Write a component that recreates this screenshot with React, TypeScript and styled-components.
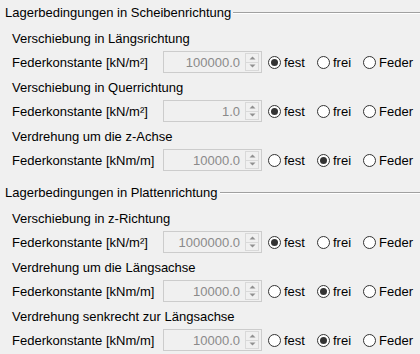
import React from "react";
import styled, { createGlobalStyle } from "styled-components";

const Global = createGlobalStyle`
  html, body { margin: 0; padding: 0; background: #f0f0f0; }
  body {
    font-family: "Liberation Sans", Arial, sans-serif;
    font-size: 13px;
    color: #000;
    width: 420px;
    height: 354px;
    overflow: hidden;
  }
`;

const Page = styled.div`
  display: flex;
  flex-direction: column;
  padding-top: 5px;
`;

const Group = styled.section<{ $gapTop: number }>`
  display: flex;
  flex-direction: column;
  margin-top: ${(p) => p.$gapTop}px;
`;

const GroupHeader = styled.div`
  display: flex;
  align-items: center;
  height: 16px;
  padding-left: 5px;
`;

const GroupTitle = styled.span`
  white-space: nowrap;
  line-height: 16px;
`;

const GroupLine = styled.div`
  flex: 1;
  height: 0;
  margin-left: 2px;
  border-top: 1px solid #a0a0a0;
  border-bottom: 1px solid #ffffff;
`;

const Item = styled.div<{ $first: boolean }>`
  display: flex;
  flex-direction: column;
  margin-top: ${(p) => (p.$first ? 9 : 6)}px;
`;

const SubHeading = styled.div`
  height: 18px;
  line-height: 18px;
  padding-left: 12px;
  white-space: nowrap;
`;

const Row = styled.div`
  display: flex;
  align-items: center;
  height: 22px;
  margin-top: 3px;
  padding-left: 12px;
`;

const FieldLabel = styled.span`
  flex: 0 0 151px;
  white-space: nowrap;
`;

const Spin = styled.div`
  flex: 0 0 99px;
  display: flex;
  align-items: center;
  box-sizing: border-box;
  height: 22px;
  border: 1px solid #cccccc;
  background: #f0f0f0;
`;

const SpinValue = styled.span`
  flex: 1;
  text-align: right;
  color: #8a8a8a;
  padding-right: 5px;
`;

const SpinButtons = styled.div`
  display: flex;
  flex-direction: column;
  width: 14px;
  height: 18px;
  margin-right: 2px;
  border: 1px solid #d9d9d9;
  box-sizing: border-box;
`;

const SpinBtn = styled.div<{ $down?: boolean }>`
  flex: 1;
  display: flex;
  align-items: center;
  justify-content: center;
  ${(p) => (p.$down ? "border-top: 1px solid #d9d9d9;" : "")}
`;

const Radios = styled.div`
  display: flex;
  align-items: center;
  flex-shrink: 0;
  margin-left: 6px;
  gap: 12px;
`;

const RadioOpt = styled.label`
  display: flex;
  align-items: center;
  white-space: nowrap;
`;

const RadioCircle = styled.span<{ $on: boolean }>`
  position: relative;
  box-sizing: border-box;
  width: 13px;
  height: 13px;
  border-radius: 50%;
  border: 1px solid #333333;
  background: #ffffff;
  margin-right: 3px;
  &::after {
    content: "";
    display: ${(p) => (p.$on ? "block" : "none")};
    position: absolute;
    left: 2px;
    top: 2px;
    width: 7px;
    height: 7px;
    border-radius: 50%;
    background: #333333;
  }
`;

const Arrow = ({ down }: { down?: boolean }) => (
  <svg width="7" height="4" viewBox="0 0 7 4">
    {down ? (
      <polygon points="0.5,0.5 6.5,0.5 3.5,3.5" fill="#909090" />
    ) : (
      <polygon points="0.5,3.5 6.5,3.5 3.5,0.5" fill="#909090" />
    )}
  </svg>
);

type Choice = "fest" | "frei" | "Feder";

interface Entry {
  title: string;
  unit: string;
  value: string;
  choice: Choice;
}

const groups: { title: string; gap: number; items: Entry[] }[] = [
  {
    title: "Lagerbedingungen in Scheibenrichtung",
    gap: 0,
    items: [
      { title: "Verschiebung in Längsrichtung", unit: "Federkonstante [kN/m²]", value: "100000.0", choice: "fest" },
      { title: "Verschiebung in Querrichtung", unit: "Federkonstante [kN/m²]", value: "1.0", choice: "fest" },
      { title: "Verdrehung um die z-Achse", unit: "Federkonstante [kNm/m]", value: "10000.0", choice: "frei" },
    ],
  },
  {
    title: "Lagerbedingungen in Plattenrichtung",
    gap: 14,
    items: [
      { title: "Verschiebung in z-Richtung", unit: "Federkonstante [kN/m²]", value: "1000000.0", choice: "fest" },
      { title: "Verdrehung um die Längsachse", unit: "Federkonstante [kNm/m]", value: "10000.0", choice: "frei" },
      { title: "Verdrehung senkrecht zur Längsachse", unit: "Federkonstante [kNm/m]", value: "10000.0", choice: "frei" },
    ],
  },
];

const options: Choice[] = ["fest", "frei", "Feder"];

export default function App() {
  return (
    <>
      <Global />
      <Page>
        {groups.map((g) => (
          <Group key={g.title} $gapTop={g.gap}>
            <GroupHeader>
              <GroupTitle>{g.title}</GroupTitle>
              <GroupLine />
            </GroupHeader>
            {g.items.map((it, i) => (
              <Item key={it.title} $first={i === 0}>
                <SubHeading>{it.title}</SubHeading>
                <Row>
                  <FieldLabel>{it.unit}</FieldLabel>
                  <Spin>
                    <SpinValue>{it.value}</SpinValue>
                    <SpinButtons>
                      <SpinBtn>
                        <Arrow />
                      </SpinBtn>
                      <SpinBtn $down>
                        <Arrow down />
                      </SpinBtn>
                    </SpinButtons>
                  </Spin>
                  <Radios>
                    {options.map((o) => (
                      <RadioOpt key={o}>
                        <RadioCircle $on={o === it.choice} />
                        {o}
                      </RadioOpt>
                    ))}
                  </Radios>
                </Row>
              </Item>
            ))}
          </Group>
        ))}
      </Page>
    </>
  );
}
